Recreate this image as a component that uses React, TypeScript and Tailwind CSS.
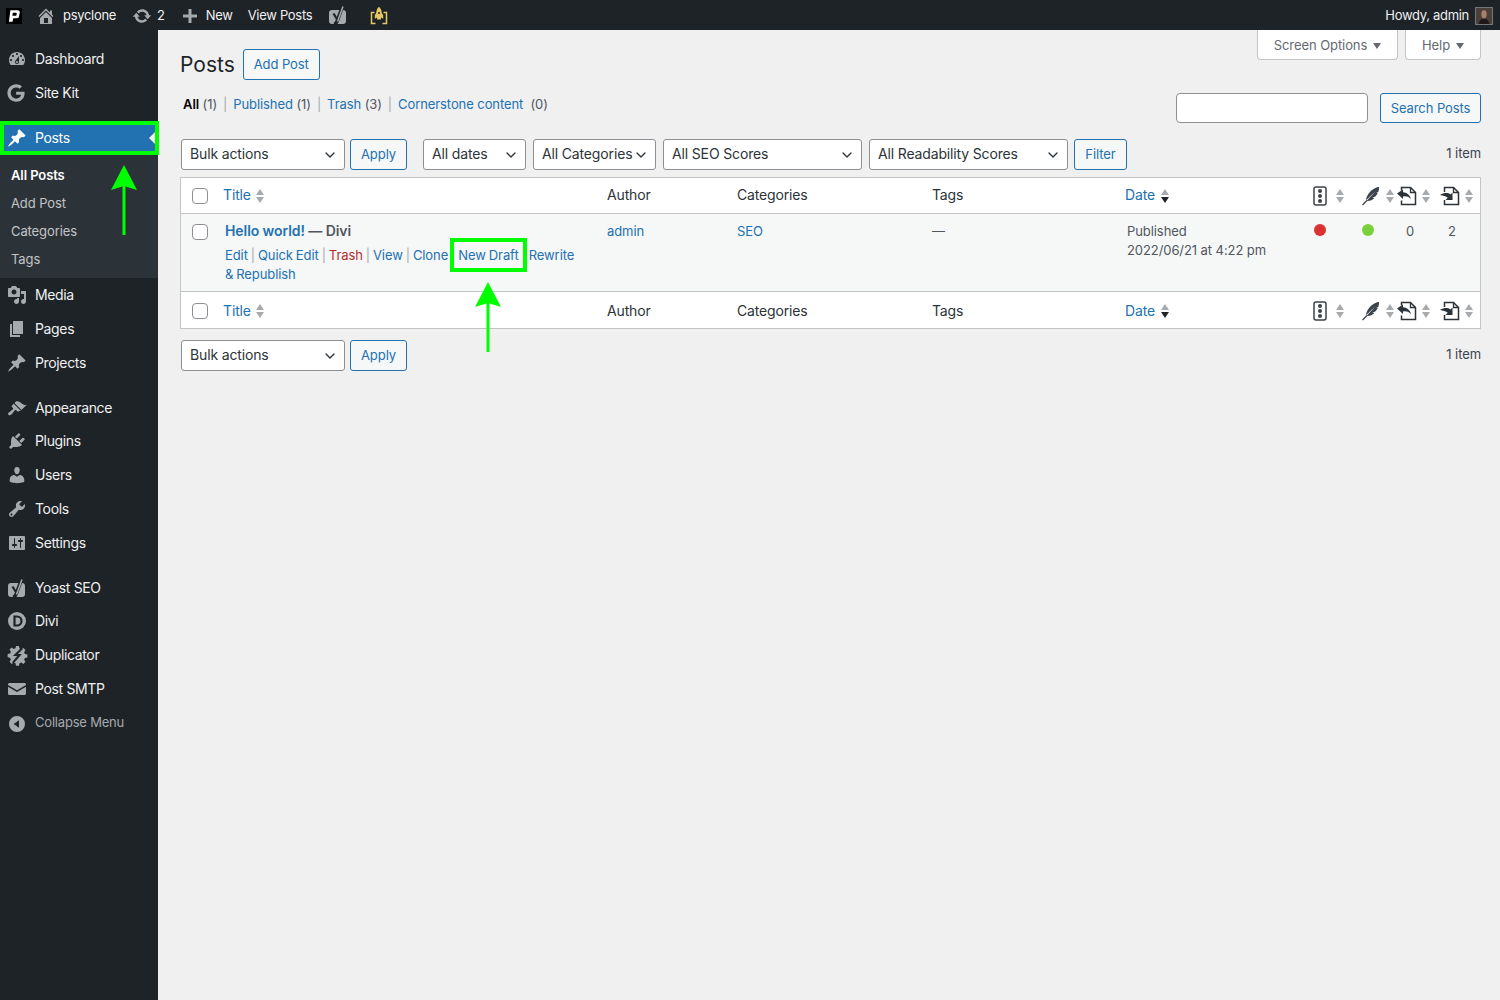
import type { ReactNode } from "react";
import { ChevronDown } from "lucide-react";
import { FaGoogle } from "react-icons/fa";

const dashicons: Record<string, string> = {
  dashboard:
    "M3.76 16h12.48c1.1-1.37 1.76-3.11 1.76-5 0-4.42-3.58-8-8-8s-8 3.58-8 8c0 1.89.66 3.63 1.76 5zM10 4c.55 0 1 .45 1 1s-.45 1-1 1-1-.45-1-1 .45-1 1-1zM6 6c.55 0 1 .45 1 1s-.45 1-1 1-1-.45-1-1 .45-1 1-1zm8 0c.55 0 1 .45 1 1s-.45 1-1 1-1-.45-1-1 .45-1 1-1zm-5.37 5.55L12 7v6c0 1.1-.9 2-2 2s-2-.9-2-2c0-.57.24-1.08.63-1.45zM4 10c.55 0 1 .45 1 1s-.45 1-1 1-1-.45-1-1 .45-1 1-1zm12 0c.55 0 1 .45 1 1s-.45 1-1 1-1-.45-1-1 .45-1 1-1zm-5 3c0-.55-.45-1-1-1s-1 .45-1 1 .45 1 1 1 1-.45 1-1z",
  pin: "M10.44 3.02l1.82-1.82 6.36 6.35-1.83 1.82c-1.05-.68-2.48-.57-3.41.36l-.75.75c-.92.93-1.04 2.35-.35 3.41l-1.83 1.82-2.41-2.41-2.8 2.79c-.42.42-3.38 2.71-3.8 2.29s1.86-3.39 2.28-3.81l2.79-2.79L4.1 9.36l1.83-1.82c1.05.69 2.48.57 3.4-.36l.75-.75c.93-.92 1.05-2.35.36-3.41z",
  media:
    "M13 11V4c0-.55-.45-1-1-1h-1.67L9 1H5L3.67 3H2c-.55 0-1 .45-1 1v7c0 .55.45 1 1 1h10c.55 0 1-.45 1-1zM7 4.5c1.38 0 2.5 1.12 2.5 2.5S8.38 9.5 7 9.5 4.5 8.38 4.5 7 5.62 4.5 7 4.5zM14 6h5v10.5c0 1.38-1.12 2.5-2.5 2.5S14 17.88 14 16.5s1.12-2.5 2.5-2.5c.17 0 .34.02.5.05V9h-3V6zm-4 8.05V13h2v3.5c0 1.38-1.12 2.5-2.5 2.5S7 17.88 7 16.5 8.12 14 9.5 14c.17 0 .34.02.5.05z",
  page: "M6 15V2h10v13H6zm-1 1h8v2H3V5h2v11z",
  appearance:
    "M14.48 11.06L7.41 3.99l1.5-1.5c.5-.56 2.3-.47 3.51.32 1.21.8 1.43 1.28 2.91 2.1 1.18.64 2.45 1.26 4.45.85zm-.71.71L6.7 4.7 4.93 6.47c-.39.39-.39 1.02 0 1.41l1.06 1.06c.39.39.39 1.03 0 1.42-.6.6-1.43 1.11-2.21 1.69-.35.26-.7.53-1.01.84C1.43 13.23.4 14.84 1.4 15.84c.98 1 2.59-.01 3.93-1.39.3-.31.58-.65.84-1 .58-.79 1.09-1.61 1.69-2.21.39-.39 1.02-.39 1.41 0l1.06 1.06c.39.39 1.02.39 1.41 0z",
  plugins:
    "M13.11 4.36L9.87 7.6 8 5.73l3.24-3.24c.35-.34 1.05-.2 1.56.32.52.51.66 1.21.31 1.55zm-8 1.77l.91-1.12 9.01 9.01-1.19.84c-.71.71-2.63 1.16-3.82 1.16H6.14L4.9 17.26c-.59.59-1.54.59-2.12 0-.59-.58-.59-1.53 0-2.12l1.24-1.24v-3.88c0-1.13.4-3.19 1.09-3.89zm7.26 3.97l3.24-3.24c.34-.35 1.04-.21 1.55.31.52.51.66 1.21.31 1.55l-3.24 3.25z",
  users:
    "M10 9.25c-2.27 0-2.73-3.44-2.73-3.44C7 4.02 7.82 2 9.97 2c2.16 0 2.98 2.02 2.71 3.81 0 0-.41 3.44-2.68 3.44zm0 2.57L12.72 10c2.39 0 4.52 2.33 4.52 4.53v2.49s-3.65 1.13-7.24 1.13c-3.65 0-7.24-1.13-7.24-1.13v-2.49c0-2.25 1.94-4.48 4.47-4.48z",
  tools:
    "M16.68 9.77c-1.34 1.34-3.3 1.67-4.95.99l-5.41 6.52c-.99.99-2.59.99-3.58 0s-.99-2.59 0-3.57l6.52-5.42c-.68-1.65-.35-3.61.99-4.95 1.28-1.28 3.12-1.62 4.72-1.06l-2.89 2.89 2.82 2.82 2.86-2.87c.53 1.58.18 3.39-1.08 4.65zM3.81 16.21c.4.39 1.04.39 1.43 0 .4-.4.4-1.04 0-1.43-.39-.4-1.03-.4-1.43 0-.39.39-.39 1.03 0 1.43z",
  settings:
    "M18 16V4c0-.55-.45-1-1-1H3c-.55 0-1 .45-1 1v12c0 .55.45 1 1 1h14c.55 0 1-.45 1-1zM8 11h1c.55 0 1 .45 1 1s-.45 1-1 1H8v1.5c0 .28-.22.5-.5.5s-.5-.22-.5-.5V13H6c-.55 0-1-.45-1-1s.45-1 1-1h1V5.5c0-.28.22-.5.5-.5s.5.22.5.5V11zm5-2h-1c-.55 0-1-.45-1-1s.45-1 1-1h1V5.5c0-.28.22-.5.5-.5s.5.22.5.5V7h1c.55 0 1 .45 1 1s-.45 1-1 1h-1v5.5c0 .28-.22.5-.5.5s-.5-.22-.5-.5V9z",
  home: "M16 8.5l1.53 1.53-1.06 1.06L10 4.62l-6.47 6.47-1.06-1.06L10 2.5l4 4v-2h2v4zm-6-2.46l6 5.99V18H4v-5.97zM12 17v-5H8v5h4z",
  update:
    "M10.2 3.28c3.53 0 6.43 2.61 6.92 6h2.08l-3.5 4-3.5-4h2.32c-.45-1.97-2.21-3.45-4.32-3.45-1.45 0-2.73.71-3.54 1.78L4.95 5.66C6.23 4.2 8.11 3.28 10.2 3.28zm-.4 13.44c-3.52 0-6.43-2.61-6.92-6H.8l3.5-4c1.17 1.33 2.33 2.67 3.5 4H5.48c.45 1.97 2.21 3.45 4.32 3.45 1.45 0 2.73-.71 3.54-1.78l1.71 1.95c-1.28 1.46-3.15 2.38-5.25 2.38z",
  plus: "M17 8.5v3h-5.5V17h-3v-5.5H3v-3h5.5V3h3v5.5H17z",
  mail: "M2.5 4h15c.8 0 1.500.7 1.500 1.500v.4l-9 5.400-9-5.400v-.4C1 4.700 1.700 4 2.500 4zM1 7.700l9 5.300 9-5.300v6.800c0 .8-.7 1.500-1.500 1.500h-15c-.8 0-1.500-.7-1.500-1.500z",
  collapse: "M10 2a8 8 0 1 0 0 16 8 8 0 0 0 0-16zm2 4.200v7.600L6.600 10z",
};

const Dashicon = ({ name, className }: { name: string; className?: string }) => (
  <svg viewBox="0 0 20 20" fill="currentColor" fillRule="evenodd" className={className}>
    <path d={dashicons[name]} />
  </svg>
);

const menuIcon = "h-5 w-5 text-[#a7aaad]";

const YoastIcon = ({ className }: { className: string }) => (
  <svg viewBox="0 0 20 20" fill="none" className={className}>
    <rect x="1" y="4" width="17" height="14" rx="3" fill="#a7aaad" />
    <path d="M5.500 7.500 9.500 14" stroke="#1d2327" strokeWidth="2.200" />
    <path d="M14.500 .5 9 15.500c-.6 1.700-1.500 2.500-3 2.800" stroke="#1d2327" strokeWidth="3.600" />
    <path d="M15 .5 9.500 15.500" stroke="#a7aaad" strokeWidth="1.500" />
  </svg>
);

const DiviIcon = () => (
  <svg viewBox="0 0 20 20" className={menuIcon}>
    <circle cx="10" cy="10" r="9" fill="currentColor" />
    <path d="M7.500 5.500h2.500a4.500 4.500 0 0 1 0 9H7.500z" fill="none" stroke="#1d2327" strokeWidth="2.200" />
  </svg>
);

const DuplicatorIcon = () => (
  <svg viewBox="0 0 20 20" className="h-[21px] w-[21px] text-[#a7aaad]">
    <path
      d="M8.600 1h2.800l.5 2.400 1.700.7 2-1.300 2 2-1.300 2 .7 1.700 2.400.5v2.800l-2.400.5-.7 1.700 1.300 2-2 2-2-1.300-1.700.7-.5 2.400H8.600l-.5-2.400-1.700-.7-2 1.300-2-2 1.300-2-.7-1.700L.6 11.400V8.600L3 8.100l.7-1.700-1.300-2 2-2 2 1.300 1.700-.7z"
      fill="currentColor"
    />
    <path d="M14.500 3 8 9.500h4L5.500 17" fill="none" stroke="#1d2327" strokeWidth="2" />
  </svg>
);

const MenuItem = ({ icon, label, active, muted, rowClass = "h-[34px]" }: { icon: ReactNode; label: string; active?: boolean; muted?: boolean; rowClass?: string }) => (
  <div className={`relative flex items-center pl-[7px] ${rowClass} ${active ? "bg-[#2271b1] text-white" : muted ? "text-[#a7aaad]" : "text-[#f0f0f1]"}`}>
    <span className="flex w-[28px] shrink-0 items-center">{icon}</span>
    <span className={`pb-[2px] whitespace-nowrap ${muted ? "text-[13px] tracking-[-0.2px]" : "text-[14px] tracking-[-0.35px]"}`}>{label}</span>
    {active && <span className="absolute right-[3px] top-[11px] h-0 w-0 border-y-[6px] border-r-[6px] border-y-transparent border-r-[#f0f0f1]" />}
  </div>
);

const Sidebar = () => (
  <aside className="w-[158px] shrink-0 bg-[#1d2327] pt-3">
    <MenuItem icon={<Dashicon name="dashboard" className={menuIcon} />} label="Dashboard" />
    <MenuItem icon={<FaGoogle className="h-[18px] w-[18px] text-[#a7aaad]" />} label="Site Kit" />
    <div className="h-[11px]" />
    <MenuItem icon={<Dashicon name="pin" className="h-5 w-5 text-white" />} label="Posts" active />
    <div className="flex h-[123px] flex-col bg-[#2c3338] pt-[7px] pl-[11px] text-[13px] tracking-[-0.1px] text-[#c3c4c7]">
      <div className="flex h-7 items-center font-semibold text-white">All Posts</div>
      <div className="flex h-7 items-center">Add Post</div>
      <div className="flex h-7 items-center">Categories</div>
      <div className="flex h-7 items-center">Tags</div>
    </div>
    <MenuItem icon={<Dashicon name="media" className={menuIcon} />} label="Media" />
    <MenuItem icon={<Dashicon name="page" className={menuIcon} />} label="Pages" />
    <MenuItem icon={<Dashicon name="pin" className={menuIcon} />} label="Projects" />
    <div className="h-[11px]" />
    <MenuItem icon={<Dashicon name="appearance" className={menuIcon} />} label="Appearance" rowClass="h-[33px] pt-[2px]" />
    <MenuItem icon={<Dashicon name="plugins" className={menuIcon} />} label="Plugins" />
    <MenuItem icon={<Dashicon name="users" className={menuIcon} />} label="Users" />
    <MenuItem icon={<Dashicon name="tools" className={menuIcon} />} label="Tools" />
    <MenuItem icon={<Dashicon name="settings" className={menuIcon} />} label="Settings" />
    <div className="h-[11px]" />
    <MenuItem icon={<YoastIcon className={menuIcon} />} label="Yoast SEO" rowClass="h-[33px] pt-[2px]" />
    <MenuItem icon={<DiviIcon />} label="Divi" />
    <MenuItem icon={<DuplicatorIcon />} label="Duplicator" />
    <MenuItem icon={<Dashicon name="mail" className={menuIcon} />} label="Post SMTP" />
    <MenuItem icon={<Dashicon name="collapse" className={menuIcon} />} label="Collapse Menu" muted rowClass="h-[34px] pt-[2px]" />
  </aside>
);

const TopBar = () => (
  <header className="flex h-[30px] items-center bg-[#1d2327] pt-[1px] text-[13px] tracking-[-0.3px] text-[#f0f0f1]">
    <svg viewBox="0 0 22 22" className="ml-[6px] h-[16px] w-[16px] bg-black">
      <path d="M6 3h10a3 3 0 0 1 3 3l-1 5a3 3 0 0 1-3 3H10l-1 5H4zM9.500 6.500l-.8 4.200h4.800a.8.8 0 0 0 .8-.8l.5-2.600a.8.8 0 0 0-.8-.8z" fill="#fff" fillRule="evenodd" />
    </svg>
    <Dashicon name="home" className="ml-[14px] h-5 w-5 text-[#a7aaad]" />
    <span className="ml-[7px]">psyclone</span>
    <Dashicon name="update" className="ml-[16px] h-5 w-5 text-[#a7aaad]" />
    <span className="ml-[5px]">2</span>
    <Dashicon name="plus" className="ml-[15px] h-5 w-5 text-[#a7aaad]" />
    <span className="ml-[6px]">New</span>
    <span className="ml-[15px]">View Posts</span>
    <YoastIcon className="ml-[16px] h-5 w-5" />
    <svg viewBox="0 0 20 20" fill="none" className="ml-[21px] h-5 w-5 text-[#e6c665]">
      <path d="M5.500 6.500H2.500v11h4M14.500 6.500h3v11h-4" stroke="currentColor" strokeWidth="1.500" />
      <path d="M10 .8c1.800 1.500 2.700 3.600 2.700 6l1.500 2.500v3.500l-2.200-1.300v2H8v-2l-2.200 1.300V9.300l1.500-2.500c0-2.400.9-4.500 2.700-6z" fill="currentColor" />
      <circle cx="10" cy="7" r="1" fill="#1d2327" />
    </svg>
    <span className="ml-auto">Howdy, admin</span>
    <svg viewBox="0 0 18 18" className="ml-[6px] mr-[7px] h-[18px] w-[18px] border border-[#72777c] bg-[#4a4039]">
      <ellipse cx="9" cy="7" rx="3" ry="4.500" fill="#a8806c" />
      <path d="M3 18c.5-4 3-5.500 6-5.500s5.500 1.500 6 5.500z" fill="#1c1917" />
    </svg>
  </header>
);

const Button = ({ children, className = "h-[31px]" }: { children: ReactNode; className?: string }) => (
  <div className={`flex items-center justify-center rounded-[3px] border border-[#2271b1] bg-[#f6f7f7] text-[13px] text-[#2271b1] ${className}`}>{children}</div>
);

const Select = ({ label, className }: { label: string; className: string }) => (
  <div className={`flex h-[31px] items-center justify-between rounded-[3px] border border-[#8c8f94] bg-white pl-2 pr-[6px] text-[14px] tracking-[-0.15px] whitespace-nowrap text-[#2c3338] ${className}`}>
    <span className="pb-[2px]">{label}</span>
    <ChevronDown className="h-4 w-4" strokeWidth={2} />
  </div>
);

const Checkbox = () => <span className="block h-4 w-4 rounded-[4px] border border-[#8c8f94] bg-white" />;

const SortArrows = ({ activeDown }: { activeDown?: boolean }) => (
  <svg viewBox="0 0 10 16" className="h-4 w-[10px]">
    <path d="M5 1l4 6H1z" fill="#a7aaad" />
    <path d="M5 15L1 9h8z" fill={activeDown ? "#1d2327" : "#a7aaad"} />
  </svg>
);

const TrafficIcon = () => (
  <svg viewBox="0 0 14 20" fill="none" className="h-5 w-[14px] text-[#3c434a]">
    <rect x="1" y="1" width="12" height="18" rx="2" stroke="currentColor" strokeWidth="1.500" />
    <circle cx="7" cy="5" r="2" fill="currentColor" />
    <circle cx="7" cy="10" r="2" fill="currentColor" />
    <circle cx="7" cy="15" r="2" fill="currentColor" />
  </svg>
);

const FeatherIcon = () => (
  <svg viewBox="0 0 20 20" className="h-5 w-5 text-[#3c434a]">
    <path d="M18.500 .5c-4 .8-8.500 3.500-10.800 7-1.400 2.100-2.500 4.500-2.900 6.800C8.500 11 11.500 8 14.500 5.500 11.800 8.500 8.500 11.500 5.500 15c3 .4 6-.8 7.800-3l-2-.2 3-1.300c1.100-1.200 1.900-2.300 2.600-3.700l-1.800-.1 2.300-1c.6-1.800.8-3.500.6-5.200z" fill="currentColor" />
    <path d="M1.500 19 6 14.500" stroke="currentColor" strokeWidth="1.300" />
  </svg>
);

const LinkFileIcon = ({ inbound }: { inbound?: boolean }) => (
  <svg viewBox="0 0 22 20" fill="none" className="h-5 w-[22px] text-[#2c3338]">
    <path d={inbound ? "M5.500 4.500v-3h9l5 5v12h-14v-4" : "M5.500 6v-4.500h9l5 5v12h-14v-4.500"} stroke="currentColor" strokeWidth="1.500" />
    <path d="M14.500 1.500v5h5" stroke="currentColor" strokeWidth="1.300" />
    <path
      d={inbound ? "M1 7.500 7 3.500v2.800c4 .2 7 2.700 8 6.700-2.500-2.500-5-3-8-2.500v2.500z" : "M1 9c4-2.500 8-2.500 10.500-.5l2-2V14H6.500l2.200-2.200C7 10.300 4 9.500 1 9z"}
      fill="currentColor"
    />
  </svg>
);

const cols = "grid grid-cols-[42px_384px_130px_195px_193px_188px_48px_36px_42px_41px]";

const HeadRow = ({ rowClass }: { rowClass: string }) => (
  <div className={`${cols} h-[36px] items-center bg-white text-[14px] tracking-[-0.15px] text-[#2c3338] ${rowClass}`}>
    <span className="pl-[11px]"><Checkbox /></span>
    <span className="flex items-center gap-[4px] text-[#2271b1]"><span className="pb-[2px]">Title</span> <SortArrows /></span>
    <span className="pb-[2px]">Author</span>
    <span className="pb-[2px]">Categories</span>
    <span className="pb-[2px]">Tags</span>
    <span className="flex items-center gap-[5px] text-[#2271b1]"><span className="pb-[2px]">Date</span> <SortArrows activeDown /></span>
    <span className="flex items-center gap-[8px]"><TrafficIcon /><SortArrows /></span>
    <span className="flex items-center gap-[4px]"><FeatherIcon /><SortArrows /></span>
    <span className="-ml-[1px] flex items-center gap-[3px]"><LinkFileIcon inbound /><SortArrows /></span>
    <span className="flex items-center gap-[3px]"><LinkFileIcon /><SortArrows /></span>
  </div>
);

const Sep = () => <span className="text-[#a7aaad]">|</span>;

const PostRow = () => (
  <div className={`${cols} h-[78px] border-b border-[#c3c4c7] bg-[#f6f7f7] pt-[7px] text-[13px] leading-[19px] text-[#50575e]`}>
    <span className="pl-[11px] pt-[3px]"><Checkbox /></span>
    <div className="-mt-[1px] pl-[2px]">
      <div className="text-[14px] leading-[21px] font-semibold">
        <span className="text-[#2271b1]">Hello world!</span> <span className="text-[#50575e]">— Divi</span>
      </div>
      <div className="mt-[5px] w-[358px] [word-spacing:-0.65px]">
        <span className="text-[#2271b1]">Edit</span> <Sep /> <span className="text-[#2271b1]">Quick Edit</span> <Sep /> <span className="text-[#b32d2e]">Trash</span> <Sep /> <span className="text-[#2271b1]">View</span> <Sep /> <span className="text-[#2271b1]">Clone</span> <Sep /> <span className="text-[#2271b1]">New Draft</span> <Sep /> <span className="text-[#2271b1]">Rewrite</span> <span className="text-[#2271b1]">&amp; Republish</span>
      </div>
    </div>
    <span className="pt-[1px] text-[#2271b1]">admin</span>
    <span className="pt-[1px] text-[#2271b1]">SEO</span>
    <span className="pt-[1px]">—</span>
    <span className="pl-[2px] pt-[1px]">Published<br />2022/06/21 at 4:22 pm</span>
    <span className="pl-[1px] pt-[3px]"><span className="block h-3 w-3 rounded-full bg-[#dc3232]" /></span>
    <span className="pl-[1px] pt-[3px]"><span className="block h-3 w-3 rounded-full bg-[#7ad03a]" /></span>
    <span className="pl-[9px] pt-[1px]">0</span>
    <span className="pl-[9px] pt-[1px]">2</span>
  </div>
);

const Overlays = () => (
  <>
    <div className="absolute left-0 top-[121px] h-[34px] w-[159px] border-[4px] border-[#00ff00]" />
    <div className="absolute left-[450px] top-[238px] h-[34px] w-[77px] border-[4px] border-[#00ff00]" />
    <svg viewBox="0 0 26 70" className="absolute left-[111px] top-[165px] h-[70px] w-[26px]">
      <path d="M13 0l13 25-13-4-13 4z" fill="#00ff00" />
      <rect x="11.500" y="20" width="3" height="50" fill="#00ff00" />
    </svg>
    <svg viewBox="0 0 26 70" className="absolute left-[475px] top-[282px] h-[70px] w-[26px]">
      <path d="M13 0l13 25-13-4-13 4z" fill="#00ff00" />
      <rect x="11.500" y="20" width="3" height="50" fill="#00ff00" />
    </svg>
  </>
);

export default function App() {
  return (
    <div className="relative flex min-h-screen flex-col bg-[#f0f0f1] font-['Inter',sans-serif] tracking-[-0.08px]">
      <TopBar />
      <div className="flex flex-1">
        <Sidebar />
        <main className="flex-1 pl-[22px] pr-[19px]">
          <div className="flex justify-end gap-[7px]">
            <div className="flex h-[30px] w-[141px] items-center justify-center gap-[6px] rounded-b-[4px] border border-t-0 border-[#c3c4c7] bg-white pt-[2px] text-[13px] text-[#646970]">
              Screen Options <span className="h-0 w-0 border-x-[4.5px] border-t-[6px] border-x-transparent border-t-[#646970]" />
            </div>
            <div className="flex h-[30px] w-[76px] items-center justify-center gap-[6px] rounded-b-[4px] border border-t-0 border-[#c3c4c7] bg-white pt-[2px] text-[13px] text-[#646970]">
              Help <span className="h-0 w-0 border-x-[4.5px] border-t-[6px] border-x-transparent border-t-[#646970]" />
            </div>
          </div>

          <div className="-mt-[11px] flex items-center">
            <h1 className="text-[21px] leading-[31px] tracking-[0px] text-[#1d2327]">Posts</h1>
            <Button className="ml-[8px] h-[31px] w-[77px] pt-[1px]">Add Post</Button>
          </div>

          <div className="mt-[13px] flex items-start justify-between">
            <div className="pl-[3px] pt-[2px] text-[13px] leading-[19px] text-[#50575e]">
              <span className="font-semibold text-black">All</span> (1) <span className="mx-[2.35px] text-[#a7aaad]">|</span> <span className="text-[#2271b1]">Published</span> (1) <span className="mx-[2.35px] text-[#a7aaad]">|</span> <span className="text-[#2271b1]">Trash</span> (3) <span className="mx-[2.35px] text-[#a7aaad]">|</span> <span className="text-[#2271b1]">Cornerstone content</span> &nbsp;(0)
            </div>
            <div className="flex gap-3">
              <div className="h-[30px] w-[192px] rounded-[4px] border border-[#8c8f94] bg-white" />
              <Button className="h-[30px] w-[101px] pt-[1px]">Search Posts</Button>
            </div>
          </div>

          <div className="mt-[16px] ml-[1px] flex items-center">
            <Select label="Bulk actions" className="w-[164px]" />
            <Button className="ml-[5px] h-[31px] w-[57px]">Apply</Button>
            <Select label="All dates" className="ml-[16px] w-[103px]" />
            <Select label="All Categories" className="ml-[7px] w-[123px]" />
            <Select label="All SEO Scores" className="ml-[7px] w-[199px]" />
            <Select label="All Readability Scores" className="ml-[7px] w-[199px]" />
            <Button className="ml-[6px] h-[31px] w-[53px]">Filter</Button>
            <span className="ml-auto pb-[2px] text-[13px] text-[#3c434a]">1 item</span>
          </div>

          <div className="mt-[7px] border border-[#c3c4c7]">
            <HeadRow rowClass="border-b border-[#c3c4c7]" />
            <PostRow />
            <HeadRow rowClass="pt-[2px]" />
          </div>

          <div className="mt-[11px] ml-[1px] flex items-center">
            <Select label="Bulk actions" className="w-[164px]" />
            <Button className="ml-[5px] h-[31px] w-[57px]">Apply</Button>
            <span className="ml-auto pb-[2px] text-[13px] text-[#3c434a]">1 item</span>
          </div>
        </main>
      </div>
      <Overlays />
    </div>
  );
}
